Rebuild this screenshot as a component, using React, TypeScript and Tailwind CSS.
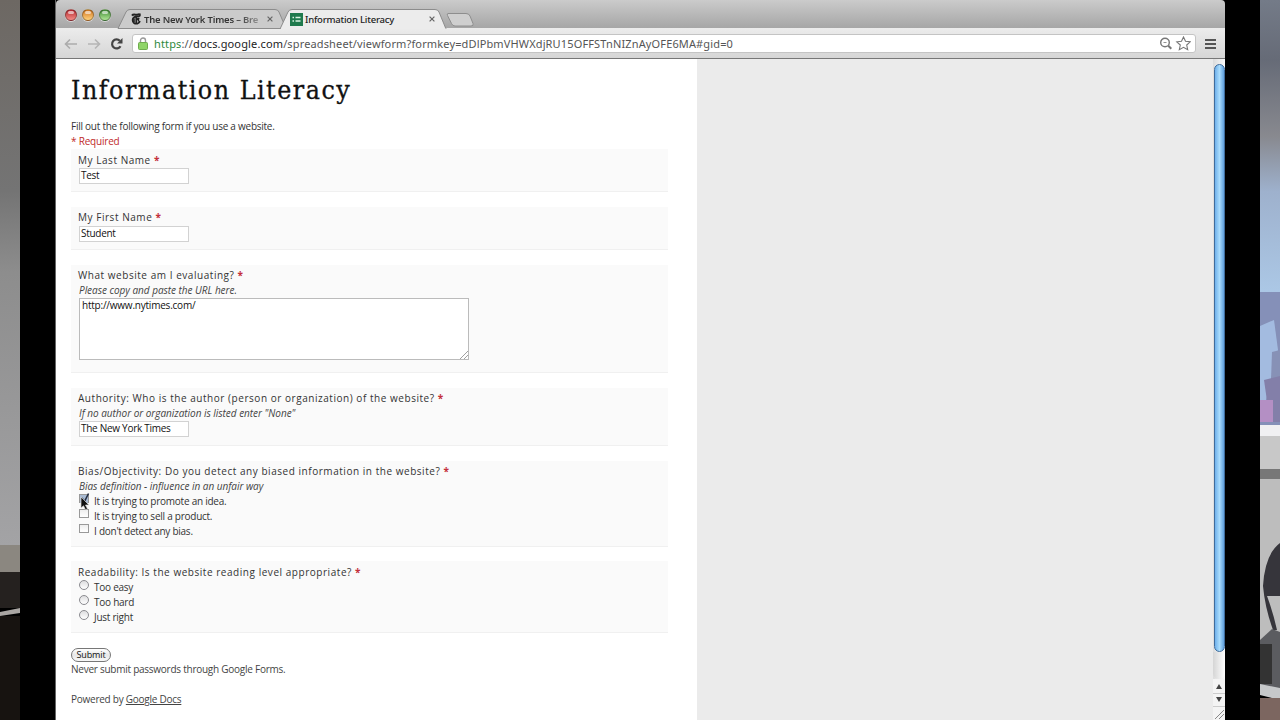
import type { ReactNode } from "react";

const formFont = "font-['Open_Sans','Noto_Sans',sans-serif]";
const chromeFont = "font-['Noto_Sans','Open_Sans',sans-serif]";
const smallText = "text-[10px] leading-[15px] tracking-[-0.25px] whitespace-nowrap";

function TrafficLight({ className }: { className: string }) {
  return (
    <div className={`size-3 overflow-hidden rounded-full border border-black/30 shadow-[0_1px_0_rgba(255,255,255,0.5)] ${className}`}>
      <div className="mx-auto mt-px h-[3px] w-1.5 rounded-full bg-white/60" />
    </div>
  );
}

function TimesIcon() {
  return (
    <svg width="10" height="12" viewBox="0 0 10 12" fill="none" stroke="#222" className="shrink-0">
      <path d="M1 2.6C2.6.2 5.4 3 8.6 1.2" strokeWidth="2" />
      <path d="M8.8.6v2.2C8 4 5 3 3 4.2 1.2 5.2 1.2 8.6 3 10c2 1.4 5 .6 6-1.8" strokeWidth="1.8" />
      <path d="M5.2 3.6v6.800M3 5.200v4M7.400 5.200v3.200M5.400 6.200l3-1" strokeWidth="1.6" />
    </svg>
  );
}

function SheetIcon() {
  return (
    <svg width="13" height="13" viewBox="0 0 13 13" className="shrink-0">
      <rect width="13" height="13" fill="#1f7a4d" />
      <path d="M2.5 4.5h1.500M5.500 4.500h5M2.500 8h1.500M5.500 8h5" stroke="#d9f3e2" strokeWidth="1.5" />
    </svg>
  );
}

function CloseIcon() {
  return (
    <svg width="6" height="6" viewBox="0 0 6 6" className="mt-[3px] shrink-0">
      <path d="M.6.6l4.800 4.800M5.400.6L.6 5.400" stroke="#666" strokeWidth="1.200" />
    </svg>
  );
}

function TabStrip() {
  return (
    <div className="relative h-7 rounded-t-[4px] bg-linear-to-b from-[#cbcbcb] to-[#a6a6a6]">
      <svg className="absolute inset-0" width="1169" height="29" viewBox="0 0 1169 29">
        <path d="M62 28.500l8-16.500q1.200-2.500 4-2.500h145q3 0 4 2.500l7 16.500z" fill="#cbcbcb" stroke="#8c8c8c" />
        <path d="M224 29l8-17q1.200-2.500 4-2.500h143q3 0 4 2.500l7 17z" fill="#ececec" stroke="#8c8c8c" />
        <path d="M225 29h164.500" stroke="#ececec" strokeWidth="2" />
        <path d="M392 13.500h18q3 0 4 2.500l3 7.500q1 2.500-2 2.500h-16q-2.500 0-3.500-2.500l-4-8q-.8-2 .5-2z" fill="#cfcfcf" stroke="#8e8e8e" />
      </svg>
      <div className="relative flex h-full items-start pl-[9px]">
        <div className="flex gap-[5px] pt-[9px]">
          <TrafficLight className="bg-linear-to-b from-[#b4232f] to-[#f58b87]" />
          <TrafficLight className="bg-linear-to-b from-[#cf7418] to-[#ffd27c]" />
          <TrafficLight className="bg-linear-to-b from-[#3f8a35] to-[#b0e896]" />
        </div>
        <div className="mt-[13px] ml-[20px] flex w-[142px] items-start">
          <TimesIcon />
          <span className="ml-[3px] w-[123px] bg-linear-to-r from-[#333] from-75% to-[#bbb] bg-clip-text text-[9.5px] leading-[13px] font-semibold tracking-[-0.2px] whitespace-nowrap text-transparent">
            The New York Times – Bre
          </span>
          <CloseIcon />
        </div>
        <div className="mt-[13px] ml-[17px] flex w-[148px] items-start">
          <SheetIcon />
          <span className="ml-0.5 w-[124px] text-[9.5px] leading-[13px] font-medium tracking-[-0.2px] whitespace-nowrap text-[#222]">
            Information Literacy
          </span>
          <CloseIcon />
        </div>
      </div>
    </div>
  );
}

function Toolbar() {
  return (
    <div className="flex h-[31px] items-center border-b border-[#777] bg-linear-to-b from-[#ececec] to-[#d6d6d6] pt-px pl-2">
      <svg width="62" height="16" viewBox="0 0 62 16" fill="none" className="shrink-0">
        <path d="M13 8H2M6 3.500L1.500 8 6 12.500" stroke="#acacac" strokeWidth="1.600" />
        <path d="M24 8h11M31 3.500L35.500 8 31 12.500" stroke="#b5b5b5" strokeWidth="1.600" />
        <path d="M56.500 10.200A4.500 4.500 0 1 1 55.800 4.800" stroke="#444" strokeWidth="2.200" />
        <path d="M58.500 2v5.500H53z" fill="#444" />
      </svg>
      <div className="ml-1.5 flex h-[19px] w-[1064px] items-center rounded-[3px] border border-[#c4c4c4] bg-white pr-1 pl-[5px]">
        <svg width="10" height="13" viewBox="0 0 10 13" className="shrink-0">
          <path d="M2.500 6V3.500a2.500 2.500 0 0 1 5 0V6" fill="none" stroke="#999" strokeWidth="1.400" />
          <rect x=".5" y="5.500" width="9" height="7" rx="1" fill="#8fd468" stroke="#6fac4e" />
        </svg>
        <span className="ml-1.5 text-[11px] leading-4 tracking-[0.14px] whitespace-nowrap text-[#555]">
          <span className="text-[#2f8a3d]">https</span>://<span className="text-[#222]">docs.google.com</span>
          /spreadsheet/viewform?formkey=dDlPbmVHWXdjRU15OFFSTnNIZnAyOFE6MA#gid=0
        </span>
        <svg width="32" height="15" viewBox="0 0 32 15" fill="none" stroke="#777" className="ml-auto shrink-0">
          <circle cx="6" cy="6.500" r="4.300" strokeWidth="1.400" />
          <path d="M9.300 9.800l3 3" strokeWidth="2" />
          <path d="M4.500 6.500h3" strokeWidth=".8" />
          <path d="M24.500 1l2 4.300 4.700.5-3.500 3.200 1 4.700-4.200-2.400-4.200 2.400 1-4.700-3.500-3.200 4.700-.5z" strokeWidth="1.100" />
        </svg>
      </div>
      <div className="ml-[9px] flex w-[11px] flex-col gap-0.5">
        <div className="h-0.5 bg-[#555]" />
        <div className="h-0.5 bg-[#555]" />
        <div className="h-0.5 bg-[#555]" />
      </div>
    </div>
  );
}

type QuestionProps = {
  title: string;
  help?: string;
  className: string;
  children: ReactNode;
};

function Question({ title, help, className, children }: QuestionProps) {
  return (
    <div className={`w-[597px] border-b border-[#f0f0f0] bg-[#fafafa] pl-2 ${className}`}>
      <div className="-ml-px h-[15px] text-[10px] leading-[15px] font-medium tracking-[0.54px] whitespace-nowrap text-[#333]">
        {title} <span className="font-bold text-[#c4303a]">*</span>
      </div>
      {help && <div className="h-[15px] text-[10px] leading-[15px] tracking-[-0.03px] whitespace-nowrap text-[#444] italic">{help}</div>}
      {children}
    </div>
  );
}

function TextInput({ value, className = "" }: { value: string; className?: string }) {
  return (
    <div className={`h-4 w-[110px] border border-[#d2d2d2] bg-white pl-px text-[10px] leading-[13px] tracking-[-0.28px] text-[#111] ${className}`}>
      {value}
    </div>
  );
}

function Option({ label, kind, checked }: { label: string; kind: "checkbox" | "radio"; checked?: boolean }) {
  return (
    <div className="flex h-[15px] items-start">
      {kind === "radio" ? (
        <div className="size-[10px] rounded-full border border-[#8b8b90] bg-linear-to-b from-[#dedee0] to-white" />
      ) : (
        <div className="relative h-[9px] w-[10px] border border-[#999] bg-linear-to-b from-[#eee] to-white">
          {checked && (
            <svg width="12" height="12" viewBox="0 0 12 12" className="absolute -top-[3px] -left-px">
              <path d="M1 3h8v8H1z" fill="#a9bbd3" />
              <path d="M3 6l2.500 3.500L9.500 1.500" fill="none" stroke="#222c40" strokeWidth="1.500" />
            </svg>
          )}
        </div>
      )}
      <span className={`ml-[5px] text-[#333] ${smallText}`}>{label}</span>
    </div>
  );
}

function FormPage() {
  return (
    <div className={`w-[641px] bg-white pl-[15px] ${formFont}`}>
      <h1 className="h-[60px] pt-[13px] font-['DejaVu_Serif_Condensed','DejaVu_Serif',serif] text-[26.5px] leading-9 tracking-[1.5px] whitespace-nowrap text-[#111] [-webkit-text-stroke:0.3px_#111]">
        Information Literacy
      </h1>
      <div className={`text-[#333] ${smallText}`}>Fill out the following form if you use a website.</div>
      <div className="text-[10px] leading-[15px] tracking-[-0.2px] text-[#c02a2a]">* Required</div>

      <Question title="My Last Name" className="h-[43px] pt-1">
        <TextInput value="Test" />
      </Question>
      <Question title="My First Name" className="mt-[15px] h-[43px] pt-[3px]">
        <TextInput value="Student" className="mt-px" />
      </Question>
      <Question title="What website am I evaluating?" help="Please copy and paste the URL here." className="mt-[15px] h-[108px] pt-[3px]">
        <div className="flex h-[62px] w-[390px] items-end justify-between border border-[#bbb] bg-white pl-0.5">
          <span className="self-start text-[10px] leading-[13px] tracking-[-0.22px] text-[#111]">http://www.nytimes.com/</span>
          <svg width="8" height="8" viewBox="0 0 8 8" stroke="#888" strokeWidth=".8">
            <path d="M0 8l8-8M4 8l4-4" />
          </svg>
        </div>
      </Question>
      <Question
        title="Authority: Who is the author (person or organization) of the website?"
        help={'If no author or organization is listed enter "None"'}
        className="mt-[15px] h-[58px] pt-[3px]"
      >
        <TextInput value="The New York Times" />
      </Question>
      <Question
        title="Bias/Objectivity: Do you detect any biased information in the website?"
        help="Bias definition - influence in an unfair way"
        className="mt-[15px] h-[86px] pt-[3px]"
      >
        <Option kind="checkbox" label="It is trying to promote an idea." checked />
        <Option kind="checkbox" label="It is trying to sell a product." />
        <Option kind="checkbox" label="I don't detect any bias." />
      </Question>
      <Question title="Readability: Is the website reading level appropriate?" className="mt-[14px] h-[72px] pt-1">
        <Option kind="radio" label="Too easy" />
        <Option kind="radio" label="Too hard" />
        <Option kind="radio" label="Just right" />
      </Question>

      <div className="mt-[15px] flex h-[14px] w-10 items-center justify-center rounded-full border border-[#777] bg-linear-to-b from-white via-[#e8e8e8] to-[#f8f8f8] text-[9px] tracking-[-0.1px] text-[#111]">
        Submit
      </div>
      <div className={`text-[#444] ${smallText}`}>Never submit passwords through Google Forms.</div>
      <div className={`mt-[15px] text-[#444] ${smallText}`}>
        Powered by <span className="underline">Google Docs</span>
      </div>
    </div>
  );
}

function Scrollbar() {
  return (
    <div className="flex w-3 flex-col items-center bg-linear-to-r from-[#dcdcdc] to-[#fafafa] pt-[5px]">
      <div className="h-[588px] w-[11px] rounded-full border border-[#3f6c9c] bg-linear-to-r from-[#6fb0ea] via-[#a9dcfc] to-[#5f9fdc]" />
      <div className="h-[27px] w-full rounded-b-full bg-linear-to-r from-[#d5d5d5] to-white" />
      <svg width="12" height="41" viewBox="0 0 12 41">
        <path d="M0 0h12v41H0z" fill="#f4f4f4" />
        <path d="M0 14.500h12M0 27.500h12" stroke="#ccc" />
        <path d="M6 5l3 5H3zM6 23l3-5H3z" fill="#444" />
        <path d="M2 40l9-9M6 40l5-5" stroke="#888" />
      </svg>
    </div>
  );
}

// Blurred room visible left and right of the black bars
function RoomLeft() {
  return (
    <svg width="20" height="720" viewBox="0 0 20 720">
      <defs>
        <linearGradient id="wall" x1="0" y1="0" x2="0" y2="1">
          <stop offset="0" stopColor="#6d6863" />
          <stop offset=".35" stopColor="#747474" />
          <stop offset=".5" stopColor="#8d8d8d" />
          <stop offset="1" stopColor="#a3a3a5" />
        </linearGradient>
      </defs>
      <path d="M0 0h20v545H0z" fill="url(#wall)" />
      <path d="M0 545h20v30H0z" fill="#8b8780" />
      <path d="M0 572h20v36H0z" fill="#25211f" />
      <path d="M0 612l20-4v5l-20 3z" fill="#aaa6a3" />
      <path d="M0 616h20v104H0z" fill="#171310" />
    </svg>
  );
}

function RoomRight() {
  return (
    <svg width="20" height="720" viewBox="0 0 20 720">
      <defs>
        <linearGradient id="sky" x1="0" y1="0" x2="0" y2="1">
          <stop offset="0" stopColor="#747b88" />
          <stop offset=".14" stopColor="#666b77" />
          <stop offset=".32" stopColor="#88898f" />
          <stop offset=".45" stopColor="#9eb1cd" />
          <stop offset=".68" stopColor="#abc7e5" />
          <stop offset="1" stopColor="#8f9dc4" />
        </linearGradient>
      </defs>
      <path d="M0 0h20v426H0z" fill="url(#sky)" />
      <path d="M0 292h20v134H0z" fill="#8590b8" />
      <path d="M0 326l14-6 4 30-12 50H0z" fill="#a3bbe0" />
      <path d="M12 352l8-2v30h-9z" fill="#8791b6" />
      <path d="M4 380l16-4v46H10z" fill="#837fa9" />
      <path d="M0 400h13v22H0z" fill="#b48fc4" />
      <path d="M0 425h20v11H0z" fill="#f0f0f2" />
      <path d="M0 436h20v34H0z" fill="#c8c8c8" />
      <path d="M0 469h20v10H0z" fill="#777" />
      <path d="M0 479h20v161H0z" fill="#bdbdbd" />
      <path d="M20 543Q5 554 3 586q2 22 10 44h4q-4-18-10-34h13z" fill="#36353b" />
      <path d="M0 640l12-11 8 3v60H0z" fill="#5b5c60" />
      <path d="M0 644h12v40H0z" fill="#333" />
      <path d="M0 684l20 4v12l-20-5z" fill="#c6c8ca" />
      <path d="M0 698h20v22H0z" fill="#7c6660" />
    </svg>
  );
}

export default function App() {
  return (
    <div className="relative flex h-[720px] w-[1280px] overflow-hidden bg-black">
      <RoomLeft />
      <div className={`ml-[35px] flex w-[1170px] flex-col border-l border-[#666] ${chromeFont}`}>
        <TabStrip />
        <Toolbar />
        <div className="flex min-h-0 flex-1 bg-[#ebebeb]">
          <FormPage />
          <div className="flex-1" />
          <Scrollbar />
        </div>
      </div>
      <div className="ml-auto">
        <RoomRight />
      </div>
      {/* mouse pointer over the first checkbox */}
      <svg className="absolute top-[496px] left-[80px]" width="10" height="15" viewBox="0 0 10 15">
        <path d="M1 1v11l2.500-2.200 2 4 2-1-2-3.800H9z" fill="#111" stroke="#ddd" strokeWidth=".7" />
      </svg>
    </div>
  );
}
